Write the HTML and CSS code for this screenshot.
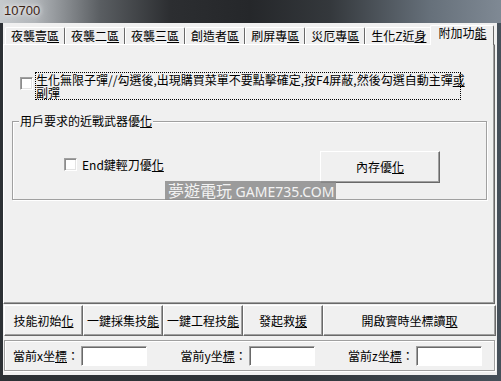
FILE: index.html
```html
<!DOCTYPE html>
<html lang="zh-Hant">
<head>
  <meta charset="utf-8">
  <title>10700</title>
  <link rel="stylesheet" href="styles.css">
</head>
<body>
  <div class="titlebar"><span class="title">10700</span></div>
  <div class="client">
    <div class="tabs">
      <span class="tab">夜襲壹<u>區</u></span>
      <span class="tab">夜襲二<u>區</u></span>
      <span class="tab">夜襲三<u>區</u></span>
      <span class="tab">創造者<u>區</u></span>
      <span class="tab">刷屏專<u>區</u></span>
      <span class="tab">災厄專<u>區</u></span>
      <span class="tab">生化Z近<u>身</u></span>
      <span class="tab tab-active">附加功<u>能</u></span>
    </div>

    <div class="panel">
      <label class="option option-wide">
        <span class="checkbox"></span>
        <span class="option-text">生化無限子彈//勾選後,出現購買菜單不要點擊確定,按F4屏蔽,然後勾選自動主彈<u>或</u><br>副彈</span>
      </label>

      <fieldset class="group">
        <legend class="group-title">用戶要求的近戰武器優<u>化</u></legend>
        <div class="group-row">
          <label class="option option-melee">
            <span class="checkbox"></span>
            <span>End鍵輕刀優<u>化</u></span>
          </label>
          <button class="btn btn-memory" type="button">內存優<u>化</u></button>
        </div>
      </fieldset>

      <div class="watermark">夢遊電玩 <span class="watermark-site">GAME735.COM</span></div>
    </div>

    <div class="actions">
      <button class="btn btn-action" type="button">技能初始<u>化</u></button>
      <button class="btn btn-action" type="button">一鍵採集技<u>能</u></button>
      <button class="btn btn-action" type="button">一鍵工程技<u>能</u></button>
      <button class="btn btn-action" type="button">發起救<u>援</u></button>
      <button class="btn btn-action btn-wide" type="button">開啟實時坐標讀<u>取</u></button>
    </div>

    <div class="coords">
      <label class="field"><span class="field-label">當前x坐<u>標</u>：</span><input class="input" type="text"></label>
      <label class="field"><span class="field-label">當前y坐<u>標</u>：</span><input class="input" type="text"></label>
      <label class="field"><span class="field-label">當前z坐<u>標</u>：</span><input class="input" type="text"></label>
    </div>
  </div>
</body>
</html>
```

FILE: styles.css
```css
*, *::before, *::after {
  margin: 0;
  box-sizing: border-box;
}

body {
  width: 501px;
  height: 381px;
  overflow: hidden;
  background: linear-gradient(90deg, #2c3034 0, #30353a 60%, #46505a 100%);
  color: #000000;
  font-family: "Noto Sans CJK TC", sans-serif;
  font-size: 12px;
  line-height: 12px;
}

u {
  text-underline-offset: 1px;
}

.titlebar {
  height: 23px;
  padding: 4px 0 0 4px;
  background: linear-gradient(90deg, #c6cacd 0, #b1b5b9 35px, #5a5e62 100px, #2c2e31 170px, #25272a 250px, #34383c 330px, #66707a 430px, #7f8994 501px);
}

.title {
  font-family: "Liberation Sans", sans-serif;
  font-size: 13px;
  line-height: 14px;
  color: #3c2416;
  text-shadow: 0 0 4px #ffffff, 0 0 8px rgba(255, 255, 255, 0.8);
}

.client {
  display: flex;
  flex-direction: column;
  width: 494px;
  height: 352px;
  margin-left: 3px;
  background-color: #f0f0f0;
}

.tabs {
  position: relative;
  z-index: 1;
  display: flex;
  align-items: flex-end;
  height: 21px;
  padding-left: 2px;
}

.tab {
  height: 17px;
  padding: 0 5px;
  border: 1px solid;
  border-color: #ffffff #696969 transparent #ffffff;
  border-bottom: none;
  border-radius: 2px 2px 0 0;
  background-color: #f0f0f0;
  line-height: 16px;
  white-space: nowrap;
}

.tab-active {
  height: 20px;
  margin: 0 -2px -1px -2px;
  padding: 0 7px;
  line-height: 14px;
}

.panel {
  position: relative;
  width: 492px;
  height: 260px;
  border: 1px solid;
  border-color: #ffffff #696969 #696969 #ffffff;
  box-shadow: inset -1px -1px 0 #a0a0a0;
}

.option {
  display: flex;
  align-items: flex-start;
}

.option-wide {
  margin: 27px 0 0 16px;
}

.checkbox {
  flex: none;
  width: 13px;
  height: 13px;
  margin-top: 4px;
  border: 1px solid;
  border-color: #a0a0a0 #ffffff #ffffff #a0a0a0;
  box-shadow: inset 1px 1px 0 #8c8c8c, inset -1px -1px 0 #e3e3e3;
  background-color: #ffffff;
}

.option-wide .checkbox {
  margin-top: 5px;
}

.option-text {
  width: 426px;
  margin-left: 2px;
  border: 1px dotted #000000;
  line-height: 13px;
  white-space: nowrap;
}

.group {
  width: 475px;
  margin: 15px 0 0 8px;
  padding: 0;
  min-inline-size: 0;
  border: 1px solid #a0a0a0;
  box-shadow: 1px 1px 0 #ffffff, inset 1px 1px 0 #ffffff;
}

.group-title {
  margin-left: 6px;
  padding: 0 1px;
  background-color: #f0f0f0;
  line-height: 12px;
}

.group-row {
  display: flex;
  padding: 24px 0 16px 51px;
}

.option-melee {
  width: 256px;
  margin-top: 3px;
}

.option-melee .checkbox {
  margin-right: 5px;
}

.option-melee span + span {
  padding-top: 5px;
}

.btn {
  display: flex;
  align-items: center;
  justify-content: center;
  padding: 0;
  border: 1px solid;
  border-color: #ffffff #696969 #696969 #ffffff;
  box-shadow: inset -1px -1px 0 #a0a0a0;
  background-color: #f0f0f0;
  color: #000000;
  font: inherit;
  line-height: 12px;
}

.btn-memory {
  width: 120px;
  height: 32px;
}

.watermark {
  position: absolute;
  left: 161px;
  top: 136px;
  width: 171px;
  height: 19px;
  padding-left: 3px;
  background-color: rgba(140, 140, 140, 0.85);
  color: #f2f2f2;
  font-family: "Noto Sans CJK TC", sans-serif;
  font-size: 16px;
  line-height: 19px;
  white-space: nowrap;
}

.watermark-site {
  font-family: "Noto Sans", sans-serif;
  font-size: 14px;
  line-height: 19px;
}

.actions {
  display: flex;
  height: 31px;
  margin: 1px 0 0 1px;
}

.btn-action {
  width: 80px;
}

.btn-action:first-child {
  width: 79px;
}

.btn-wide {
  width: 173px;
}

.coords {
  display: flex;
  align-items: center;
  justify-content: space-between;
  width: 491px;
  height: 31px;
  margin: 4px 0 0 1px;
  padding: 0 12px 0 8px;
  border: 1px solid #a0a0a0;
  box-shadow: 1px 1px 0 #ffffff, inset 1px 1px 0 #ffffff;
}

.field {
  display: flex;
  align-items: center;
}

.field-label {
  width: 68px;
  white-space: nowrap;
}

.input {
  width: 66px;
  height: 20px;
  border: 1px solid;
  border-color: #a0a0a0 #ffffff #ffffff #a0a0a0;
  box-shadow: inset 1px 1px 0 #696969;
  background-color: #ffffff;
}
```
